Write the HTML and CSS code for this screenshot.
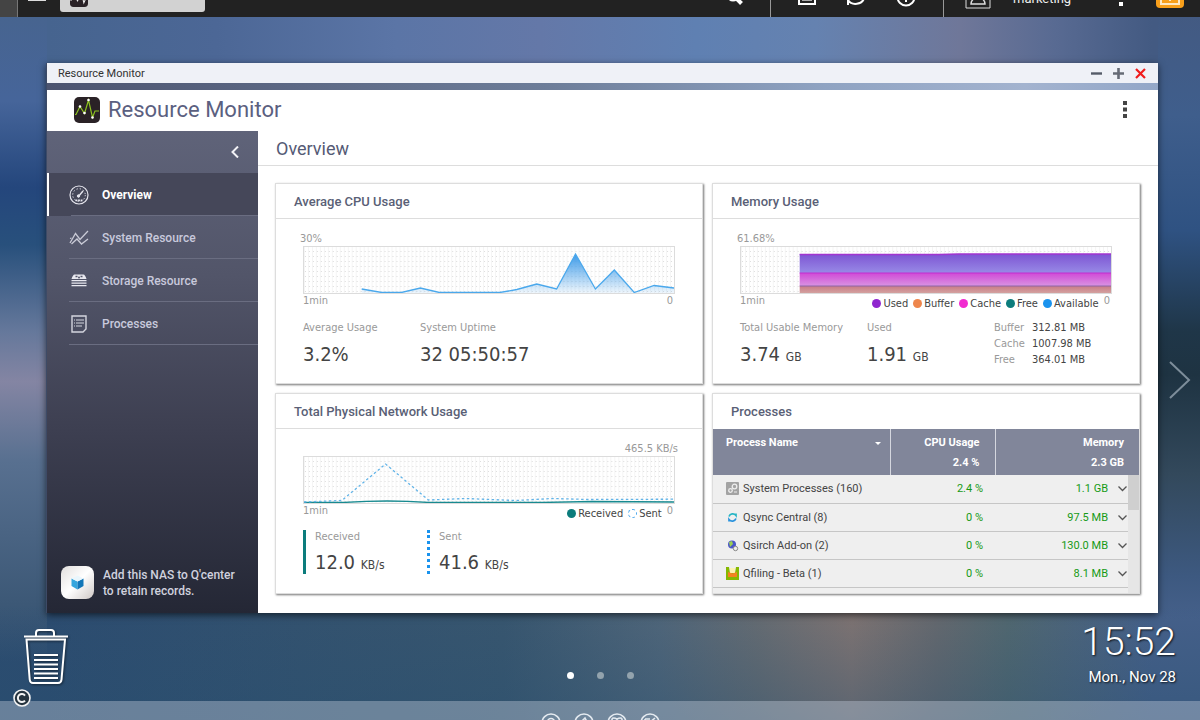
FILE: index.html
```html
<!DOCTYPE html>
<html lang="en">
<head>
<meta charset="utf-8">
<title>Resource Monitor</title>
<link rel="stylesheet" href="styles.css">
</head>
<body class="desktop">
<header class="topbar">
  <div class="topbar-row">
    <button class="top-btn home" aria-label="Desktop"></button>
    <button class="top-btn menu" aria-label="Main menu"><svg width="18" height="6" viewBox="0 0 18 6" stroke="#ddd" stroke-width="2"><path d="M0 1h18M0 5h18"/></svg></button>
    <button class="task" aria-label="Task: monitor">
      <svg width="18" height="18" viewBox="0 0 26 26"><rect width="26" height="26" rx="5" fill="#2a2226"/><path d="M1 17l5-7 5 7 5-14 4 17 3-7h3" fill="none" stroke="#eee" stroke-width="1.5"/></svg>
    </button>
    <div class="top-right">
      <button class="top-btn search" aria-label="Search"><svg width="18" height="18" viewBox="0 0 18 18" fill="none" stroke="#fff"><circle cx="7" cy="6" r="5.500" stroke-width="2"/><path d="M10.500 9.500l5 5" stroke-width="4"/></svg></button>
      <div class="top-group">
        <button class="top-btn" aria-label="Background tasks"><svg width="18" height="18" viewBox="0 0 18 18"><path d="M1 0h16v15H1z" fill="none" stroke="#fff" stroke-width="2"/><path d="M4 3h10v9H4z" fill="#aaa"/></svg></button>
        <button class="top-btn" aria-label="External devices"><svg width="20" height="20" viewBox="0 0 20 20" fill="none" stroke="#fff" stroke-width="2"><path d="M2 12a8.500 7 0 0 0 16-2V4M1 10h6M2 12v5"/></svg></button>
        <button class="top-btn" aria-label="Notifications"><svg width="20" height="20" viewBox="0 0 20 20" fill="none" stroke="#fff" stroke-width="2"><circle cx="10" cy="9" r="8.500"/><path d="M10 5v9"/></svg></button>
      </div>
      <div class="user-group">
        <svg width="26" height="24" viewBox="0 0 26 24" fill="none" stroke="#ddd"><path d="M1 0h24v22H1z"/><circle cx="13" cy="7" r="4.500"/><path d="M6 18c0-8 14-8 14 0z" stroke-width="1.500"/></svg>
        <span class="user-name">marketing</span>
        <button class="top-btn more" aria-label="More"><svg width="4" height="16" viewBox="0 0 4 16" fill="#fff"><path d="M0 0h4v4H0zM0 6h4v4H0zM0 12h4v4H0z"/></svg></button>
        <button class="top-btn dash" aria-label="Dashboard"><svg width="28" height="20" viewBox="0 0 28 20"><rect width="28" height="20" rx="4" fill="#f9a01b"/><path d="M5 7h18v9H5z" fill="none" stroke="#ffe9c4" stroke-width="2"/><path d="M14 8v5" stroke="#ffe9c4" stroke-width="2"/></svg></button>
      </div>
    </div>
  </div>
</header>

<div class="stage">
  <section class="window">
    <div class="titlebar">
      <span>Resource Monitor</span>
      <div class="win-buttons">
        <button aria-label="Minimize"><svg width="11" height="11" viewBox="0 0 11 11" stroke="#555b68" stroke-width="2.4"><path d="M0 5.5h11"/></svg></button>
        <button aria-label="Maximize"><svg width="11" height="11" viewBox="0 0 11 11" stroke="#666b76" stroke-width="2.6"><path d="M0 5.5h11M5.500 0v11"/></svg></button>
        <button aria-label="Close"><svg width="11" height="11" viewBox="0 0 11 11" stroke="#f01c1c" stroke-width="2.2"><path d="M1 1l9 9M10 1l-9 9"/></svg></button>
      </div>
    </div>
    <div class="glass"></div>
    <div class="app-head">
      <svg width="26" height="26" viewBox="0 0 26 26"><rect width="26" height="26" rx="5" fill="#2a2226"/><path d="M1 17.500h1l4-8 4.500 7L14.500 3l4 17.500 2.500-6.500h4" fill="none" stroke="#8cc21f" stroke-width="1.2"/><g fill="#fff"><circle cx="6" cy="9.500" r="1.300"/><circle cx="10.500" cy="16" r="1.300"/><circle cx="14.500" cy="3" r="1.300"/><circle cx="18.500" cy="20.500" r="1.300"/></g></svg>
      <h1>Resource Monitor</h1>
      <button class="kebab" aria-label="Options"><svg width="4" height="17" viewBox="0 0 4 17" fill="#444"><path d="M0 0h4v4H0zM0 6.500h4v4H0zM0 13h4v4H0z"/></svg></button>
    </div>
    <div class="app-body">
      <aside class="sidebar">
        <button class="collapse" aria-label="Collapse"><svg width="8" height="12" viewBox="0 0 8 12" fill="none" stroke="#f2f2f6" stroke-width="2"><path d="M7 0.500L1.500 6 7 11.500"/></svg></button>
        <nav>
          <a class="nav-item active" href="#overview"><svg width="20" height="20" viewBox="0 0 20 20" fill="none" stroke="#e6e6ee"><circle cx="10" cy="10" r="9" stroke-width="1.200"/><circle cx="10" cy="10" r="6.300" stroke-dasharray="1.300 2"/><path d="M9 12l5-6" stroke-width="1.400"/><circle cx="9.500" cy="11" r="1.200" fill="#e6e6ee"/><path d="M6.500 15.300h7" stroke-width="1.800" stroke-dasharray="1.800 .8"/></svg><span>Overview</span></a>
          <a class="nav-item" href="#system"><svg width="20" height="20" viewBox="0 0 20 20" fill="none" stroke="#c9cad6" stroke-width="1.300"><path d="M1 15L6.500 5.500l4.500 6L19 3"/><path d="M1 10.500l1.500-.5M2.500 16L8 11l4.500 5 6.500-5"/></svg><span>System Resource</span></a>
          <a class="nav-item" href="#storage"><svg width="20" height="20" viewBox="0 0 20 20" fill="#e8e8ef"><path d="M5.500 3.500h9q1.500 0 3 4.500h-15q1.500-4.500 3-4.500zM2.500 9h15v1.300h-15zM2.500 11.500h15v1.300h-15zM2.500 14h15v1.300h-15z"/><path d="M6.500 5.500h2M11.500 5.500h2" stroke="#525569" stroke-width="1.300"/><circle cx="10" cy="6.500" r="1" fill="#525569"/></svg><span>Storage Resource</span></a>
          <a class="nav-item" href="#processes"><svg width="20" height="20" viewBox="0 0 20 20" fill="none" stroke="#d4d5de" stroke-width="1.400"><path d="M3 2h14v13l-3 3H3z"/><path d="M7 6h8M7 9h8M7 12h6M5 6h1M5 9h1M5 12h1" stroke-width="1.200"/></svg><span>Processes</span></a>
        </nav>
        <a class="qcenter" href="#qcenter">
          <svg width="33" height="33" viewBox="0 0 33 33"><defs><linearGradient id="tile" x2="1" y2="1"><stop offset="0" stop-color="#e2dfde"/><stop offset=".5" stop-color="#fff"/><stop offset="1" stop-color="#cfc8c6"/></linearGradient></defs><rect width="33" height="33" rx="8" fill="url(#tile)"/><path d="M10.500 12.500l6 3v8l-6-3.500z" fill="#35a6de"/><path d="M22.500 12.500l-6 3v8l6-3.500z" fill="#1276b8"/><path d="M10.500 12.500l6-3 6 3-6 3z" fill="#eaf6fc"/></svg>
          <span>Add this NAS to Q'center<br>to retain records.</span>
        </a>
      </aside>
      <main class="content">
        <h2>Overview</h2>
        <div class="cards">
          <section class="card">
            <h3>Average CPU Usage</h3>
            <div class="card-body">
              <div class="scale">30%</div>
              <svg class="chart" viewBox="0 0 372 46" preserveAspectRatio="none">
                <defs>
                  <pattern id="grid" width="4" height="5" patternUnits="userSpaceOnUse"><path d="M0 4.500h2" stroke="#dedede"/><path d="M.5 0v5" stroke="#f5f5f5"/></pattern>
                  <linearGradient id="cpu" x2="0" y2="1"><stop offset="0" stop-color="#3c9ae8"/><stop offset="1" stop-color="#3c9ae8" stop-opacity=".08"/></linearGradient>
                </defs>
                <rect width="372" height="46" fill="url(#grid)"/>
                <path d="M58 42l20 4h20l19-5 19 5h61l17-3.500 20-5.500 20 5 19-35 20 35 19-19 20 23 20-7.500 20 2.500v5H58z" fill="url(#cpu)"/>
                <path d="M58 42l20 3.500h20l19-4.500 19 4.500h61l17-3 20-5.500 20 5 19-35 20 35 19-19 20 22.500 20-7 20 2.500" fill="none" stroke="#4aa8ec" stroke-width="1.300"/>
              </svg>
              <div class="axis"><span>1min</span><span class="zero">0</span></div>
              <div class="stats">
                <dl class="stat narrow"><dt>Average Usage</dt><dd>3.2%</dd></dl>
                <dl class="stat"><dt>System Uptime</dt><dd>32 05:50:57</dd></dl>
              </div>
            </div>
          </section>

          <section class="card">
            <h3>Memory Usage</h3>
            <div class="card-body">
              <div class="scale">61.68%</div>
              <svg class="chart" viewBox="0 0 372 46" preserveAspectRatio="none">
                <defs>
                  <linearGradient id="used" x2="0" y2="1"><stop offset="0" stop-color="#7d55d3"/><stop offset="1" stop-color="#988ae6"/></linearGradient>
                  <linearGradient id="cache" x2="0" y2="1"><stop offset="0" stop-color="#d04ad6"/><stop offset="1" stop-color="#d993e2"/></linearGradient>
                  <linearGradient id="buffer" x2="0" y2="1"><stop offset="0" stop-color="#c97b86"/><stop offset="1" stop-color="#d3a19f"/></linearGradient>
                </defs>
                <rect width="372" height="46" fill="url(#grid)"/>
                <rect x="59" y="7" width="313" height="19" fill="url(#used)"/>
                <rect x="59" y="26" width="313" height="13" fill="url(#cache)"/>
                <rect x="59" y="39" width="313" height="7" fill="url(#buffer)"/>
                <path d="M59 7.500h140l20-.5h153" fill="none" stroke="#a235cf" stroke-width="1.300"/>
                <path d="M59 26h313" stroke="#c22fd0"/><path d="M59 39h313" stroke="#8d64a8"/>
              </svg>
              <div class="axis"><span>1min</span>
                <ul class="legend">
                  <li><i class="dot used"></i>Used</li><li><i class="dot buffer"></i>Buffer</li><li><i class="dot cache"></i>Cache</li><li><i class="dot free"></i>Free</li><li><i class="dot available"></i>Available</li>
                </ul>
                <span class="zero">0</span></div>
              <div class="stats">
                <dl class="stat medium"><dt>Total Usable Memory</dt><dd>3.74 <small>GB</small></dd></dl>
                <dl class="stat medium"><dt>Used</dt><dd>1.91 <small>GB</small></dd></dl>
                <dl class="mini"><dt>Buffer</dt><dd>312.81 MB</dd><dt>Cache</dt><dd>1007.98 MB</dd><dt>Free</dt><dd>364.01 MB</dd></dl>
              </div>
            </div>
          </section>

          <section class="card">
            <h3>Total Physical Network Usage</h3>
            <div class="card-body">
              <div class="scale right">465.5 KB/s</div>
              <svg class="chart" viewBox="0 0 372 46" preserveAspectRatio="none">
                <rect width="372" height="46" fill="url(#grid)"/>
                <path d="M0 45.500h40q45-3 85 0h115l50-1 82 .5" fill="none" stroke="#188a90" stroke-width="1.300"/>
                <path d="M0 45l38-1.500L82 7l43 36 37-1.500 51 2 37-2 36 1 86-.3" fill="none" stroke="#62b4e8" stroke-width="1.300" stroke-dasharray="2.500 2.500"/>
              </svg>
              <div class="axis"><span>1min</span>
                <ul class="legend"><li><i class="dot free"></i>Received</li><li><i class="dot sent"></i>Sent</li></ul>
                <span class="zero">0</span></div>
              <div class="stats">
                <dl class="stat barred received"><dt>Received</dt><dd>12.0 <small>KB/s</small></dd></dl>
                <dl class="stat barred sent"><dt>Sent</dt><dd>41.6 <small>KB/s</small></dd></dl>
              </div>
            </div>
          </section>

          <section class="card processes">
            <h3>Processes</h3>
            <div class="table-wrap">
              <table>
                <colgroup><col class="c-name"><col class="c-cpu"><col></colgroup>
                <thead><tr>
                  <th scope="col" class="name"><span class="th-name">Process Name<i class="sort"></i></span></th>
                  <th scope="col">CPU Usage<br>2.4 %</th>
                  <th scope="col" class="mem">Memory<br>2.3 GB</th>
                </tr></thead>
                <tbody>
                  <tr><td class="name"><span class="proc"><svg width="13" height="13" viewBox="0 0 13 13"><rect width="13" height="13" rx="1" fill="#a3a3a3"/><circle cx="8.500" cy="4.500" r="2.300" fill="none" stroke="#eee" stroke-width="1.300"/><circle cx="4.500" cy="8.500" r="1.800" fill="none" stroke="#eee" stroke-width="1.300"/><path d="M8 10h3" stroke="#eee"/></svg>System Processes (160)</span></td><td>2.4 %</td><td class="mem">1.1 GB<button class="expand" aria-label="Expand System Processes"><svg width="9" height="6" viewBox="0 0 9 6"><path d="M.5.500l4 4 4-4"/></svg></button></td></tr>
                  <tr><td class="name"><span class="proc"><svg width="13" height="13" viewBox="0 0 13 13" fill="none" stroke-width="1.700"><path d="M3 5.500C4 2.500 8 2 10 4.500V2.500" stroke="#27b5c4"/><path d="M10 7.500C9 10.500 5 11 3 8.500v2" stroke="#2b93dd"/></svg>Qsync Central (8)</span></td><td>0 %</td><td class="mem">97.5 MB<button class="expand" aria-label="Expand Qsync Central"><svg width="9" height="6" viewBox="0 0 9 6"><path d="M.5.500l4 4 4-4"/></svg></button></td></tr>
                  <tr><td class="name"><span class="proc"><svg width="13" height="13" viewBox="0 0 13 13"><circle cx="6" cy="5.500" r="4" fill="#4a56c8"/><path d="M3 3l3-1 1 3-3 3z" fill="#9ccf52"/><circle cx="9.500" cy="9.500" r="2.200" fill="#eee" stroke="#888"/></svg>Qsirch Add-on (2)</span></td><td>0 %</td><td class="mem">130.0 MB<button class="expand" aria-label="Expand Qsirch Add-on"><svg width="9" height="6" viewBox="0 0 9 6"><path d="M.5.500l4 4 4-4"/></svg></button></td></tr>
                  <tr><td class="name"><span class="proc"><svg width="13" height="13" viewBox="0 0 13 13"><path d="M0 0h3l1 6h5l1-6h3v13H0z" fill="#86b800"/><path d="M4 1h5v5H4z" fill="#fdf3b0"/><path d="M2 5l4.500 1.500L11 5v5H2z" fill="#f58220"/></svg>Qfiling - Beta (1)</span></td><td>0 %</td><td class="mem">8.1 MB<button class="expand" aria-label="Expand Qfiling"><svg width="9" height="6" viewBox="0 0 9 6"><path d="M.5.500l4 4 4-4"/></svg></button></td></tr>
                </tbody>
              </table>
              <div class="track"><div class="thumb"></div></div>
            </div>
          </section>
        </div>
      </main>
    </div>
  </section>
  <div class="gutter"><button aria-label="Next desktop"><svg width="24" height="40" viewBox="0 0 24 40" fill="none" stroke="#7d8d9a" stroke-width="2"><path d="M2 2l19 18L2 38"/></svg></button></div>
</div>

<div class="desk">
  <button class="trash" aria-label="Recycle Bin"><svg width="44" height="56" viewBox="0 0 44 56" fill="none" stroke="#fff" stroke-width="2"><path d="M0 7.500h44M12 7V4q0-3 3-3h12q3 0 3 3v3M2.500 10.500h38.500l-3.500 40q-.3 3.500-3.500 3.500H9q-3 0-3.300-3.500z"/><path d="M10 26h24M10 31h24M10 35.500h24M10 40h24M10 44.500h24M10 49h24"/></svg></button>
  <div class="pager"><button class="on" aria-label="Desktop 1"></button><button aria-label="Desktop 2"></button><button aria-label="Desktop 3"></button></div>
  <div class="clock"><time class="time">15:52</time><div class="date">Mon., Nov 28</div></div>
</div>
<footer class="dock">
  <svg width="20" height="20" viewBox="0 0 20 20" fill="none" stroke="#e4eaf0" stroke-width="1.600"><circle cx="10" cy="10" r="9"/><circle cx="10" cy="9" r="3.500"/></svg>
  <svg width="20" height="20" viewBox="0 0 20 20" fill="none" stroke="#e4eaf0" stroke-width="1.600"><circle cx="10" cy="10" r="9"/><path d="M6 10l5-5 1 2-3 4M12 7l2 2"/></svg>
  <svg width="20" height="20" viewBox="0 0 20 20" fill="none" stroke="#e4eaf0" stroke-width="1.600"><circle cx="10" cy="10" r="9"/><path d="M10 6q-4-2-5 0v6M10 6q4-2 5 0v6M10 6v6"/></svg>
  <svg width="20" height="20" viewBox="0 0 20 20" fill="none" stroke="#e4eaf0" stroke-width="1.600"><circle cx="10" cy="10" r="9"/><path d="M5 6h5M5 6v6M9 10l6-5"/></svg>
</footer>
<button class="copyright" aria-label="Copyright"><svg width="18" height="18" viewBox="0 0 18 18" fill="none" stroke="#f4f4f4"><circle cx="9" cy="9" r="8" fill="#26343f" stroke-width="1.600"/><path d="M12 6.500a4 4 0 1 0 0 5" stroke-width="2"/></svg></button>
</body>
</html>
```

FILE: styles.css
```css
* { box-sizing: border-box; }
button { border: 0; padding: 0; background: none; font: inherit; color: inherit; display: flex; }
a { text-decoration: none; color: inherit; }
h1, h2, h3, dl, dd, ul { margin: 0; padding: 0; font-weight: 400; }
svg { display: block; flex: none; }

.desktop {
  margin: 0;
  min-height: 100vh;
  display: flex;
  flex-direction: column;
  position: relative;
  overflow: hidden;
  font-family: Roboto, "Liberation Sans", sans-serif;
  font-size: 12px;
  background:
    linear-gradient(rgba(38, 78, 118, 0) 84%, rgba(38, 78, 110, .4)) 100% 0 / 100% 100% no-repeat,
    linear-gradient(#47648f 2%, #46659a 14%, #24467c 26%, #28507c 34%, #65789b 46%, #8485a3 53%, #587090 64%, #3c5876 84%, #2c4c70 92%) 0 0 / 47px 100% no-repeat,
    linear-gradient(#435a82 2%, #3f5e8c 16%, #2f5282 32%, #1f3648 46%, #1e3342 52%, #33495c 66%, #3d5980 80%, #45608a 86%) 100% 0 / 42px 100% no-repeat,
    linear-gradient(90deg, #46648f 4%, #4c6796 18%, #5b75a6 33%, #6478a8 45%, #5f80b2 58%, #6582b0 68%, #6f7799 80%, #586a92 88%, #435a82 96%) 0 0 / 100% 50% no-repeat,
    linear-gradient(90deg, #2c4c70 4%, #33526f 25%, #38566f 42%, #50667a 55%, #666c72 63%, #807472 71%, #66696e 78%, #526870 84%, #45608a 96%) 0 100% / 100% 50% no-repeat;
}

.topbar { height: 17px; overflow: hidden; display: flex; align-items: flex-end; background: #222; color: #eee; }
.topbar-row { flex: 1; height: 38px; display: flex; align-items: center; }
.home { width: 18px; height: 38px; background: #444; border-right: 1px solid #777; }
.menu { margin-left: 10px; }
.task { margin-left: 14px; width: 145px; height: 28px; padding: 0 10px; align-items: center; background: #d2d2d2; border-radius: 3px; }
.top-right { margin-left: auto; height: 38px; display: flex; align-items: center; }
.search { margin-right: 26px; }
.top-group { height: 38px; display: flex; align-items: center; gap: 30px; padding: 0 27px; border-left: 1px solid #999; }
.user-group { height: 38px; display: flex; align-items: center; padding: 0 16px 0 21px; border-left: 1px solid #999; }
.user-name { width: 90px; margin-left: 22px; font-size: 13px; }
.more { margin-left: 16px; }
.dash { margin-left: 33px; }

.stage { display: flex; padding: 46px 0 0 46px; }
.window { flex: 1; min-width: 0; box-shadow: 0 2px 7px rgba(0, 0, 0, .6); border-left: 1px solid #3d4a66; }
.titlebar { height: 20px; display: flex; align-items: center; justify-content: space-between; padding: 0 12px 0 11px; background: #eff1f7; color: #333; font-size: 11px; }
.win-buttons { display: flex; gap: 11px; }
.glass { height: 7px; background: linear-gradient(90deg, #4c5470, #6d7d99 45%, #8fa3c2 70%, #a3b3cf 88%, #93a7c8); }
.app-head { height: 41px; display: flex; align-items: center; padding: 0 31px 2px 27px; background: #fff; }
.app-head h1 { margin-left: 8px; font-size: 22px; color: #5b6080; }
.kebab { margin-left: auto; }

.app-body { display: flex; background: #fff; }
.sidebar { width: 211px; flex: none; display: flex; flex-direction: column; background: linear-gradient(#5f6379, #525569 30%, #3d3f51 62%, #242735); color: #c8c9dc; }
.collapse { height: 42px; align-items: center; justify-content: flex-end; padding-right: 19px; }
.nav-item { height: 43px; display: flex; align-items: center; gap: 13px; padding-left: 22px; font-weight: 500; position: relative; }
.nav-item::after { content: ""; position: absolute; left: 22px; right: 0; bottom: 0; height: 1px; background: #6a6d81; }
.nav-item.active { background: #454759; color: #fff; font-weight: 700; border-left: 2px solid #fff; padding-left: 20px; }
.qcenter { margin-top: auto; display: flex; align-items: center; gap: 9px; padding: 0 0 14px 14px; line-height: 16px; font-weight: 500; color: #d0d1de; }

.content { flex: 1; min-width: 0; }
.content h2 { height: 35px; padding-left: 18px; line-height: 35px; font-size: 18px; color: #555a75; border-bottom: 1px solid #ddd; }
.cards { display: grid; grid-template-columns: 1fr 1fr; gap: 9px; padding: 17px 18px 19px 17px; }
.card { min-width: 0; height: 201px; background: #fff; border: 1px solid #ddd; box-shadow: 1px 1px 2px rgba(0, 0, 0, .55); }
.card h3 { height: 35px; padding-left: 18px; line-height: 35px; font-size: 13px; font-weight: 500; color: #5a5f76; border-bottom: 1px solid #ddd; }
.card-body { padding: 12px 27px 0; font-family: "DejaVu Sans Condensed", "DejaVu Sans", sans-serif; font-stretch: condensed; font-size: 11px; color: #999; }
.scale { height: 15px; line-height: 16px; margin: 0 -3px; }
.scale.right { text-align: right; }
.chart { width: 100%; height: 48px; border: 1px solid #dcdcdc; }
.axis { height: 20px; display: flex; line-height: 13px; }
.axis .zero { margin-left: auto; padding-right: 2px; }
.legend { height: 18px; margin-left: auto; display: flex; gap: 5px; list-style: none; color: #444; }
.legend li { display: flex; align-items: center; gap: 2px; }
.legend + .zero { margin-left: 5px; }
.dot { width: 9px; height: 9px; border-radius: 5px; }
.dot.used { background: #9026cf; }
.dot.buffer { background: #ee864c; }
.dot.cache { background: #f12bd0; }
.dot.free { background: #0c7c7c; }
.dot.available { background: #1a93ee; }
.dot.sent { border: 1px dashed #4aa8ec; }
.stats { display: flex; align-items: flex-start; padding-top: 6px; }
.stat dt { line-height: 16px; }
.stat dd { line-height: 36px; font-size: 20px; color: #444; white-space: nowrap; }
.stat small { font-size: 12px; }
.narrow { width: 117px; }
.medium { width: 127px; }
.mini { display: grid; grid-template-columns: 38px auto; line-height: 16px; white-space: nowrap; }
.mini dd { color: #444; }
.barred { width: 124px; height: 44px; padding-left: 9px; border-left: 3px solid #0c7c7c; }
.barred dt { line-height: 14px; }
.barred.sent { border-left: 3px dotted #1a93ee; }

.processes { overflow: hidden; }
.processes h3 { border-bottom: 0; }
.table-wrap { position: relative; height: 165px; overflow: hidden; background: #efefef; }
table { width: 100%; border-collapse: collapse; table-layout: fixed; }
.c-name { width: 177px; }
.c-cpu { width: 105px; }
th, td { padding: 0 12px; text-align: right; font-size: 11px; }
th { height: 46px; padding-right: 15px; line-height: 20px; padding-top: 4px; vertical-align: top; background: #81869a; color: #fff; font-weight: 700; border-right: 1px solid #d5d7df; }
th:last-child { border-right: 0; }
td { height: 28px; color: #169a16; border-bottom: 1px solid #c6c6c6; }
.name { text-align: left; white-space: nowrap; padding-left: 13px; }
.th-name { display: flex; align-items: center; justify-content: space-between; }
th.name { padding-right: 9px; }
.sort { border: 3px solid transparent; border-top-color: #fff; border-bottom: 0; }
td.name { color: #444; }
.proc { display: flex; align-items: center; gap: 4px; }
.expand { display: inline-flex; margin-left: 10px; vertical-align: middle; }
.expand path { fill: none; stroke: #555; stroke-width: 1.3; }
.track { position: absolute; top: 46px; right: 0; bottom: 0; width: 11px; background: #e6e6e6; }
.thumb { height: 35px; background: #cfcfcf; }

.gutter { width: 42px; display: flex; align-items: center; padding: 84px 0 0 10px; }

.desk { flex: 1; display: grid; grid-template-columns: 1fr auto 1fr; padding: 13px 24px 0; color: #fff; }
.trash { margin-top: 3px; align-self: start; justify-self: start; filter: drop-shadow(1px 1px 1px rgba(0, 0, 0, .5)); }
.pager { display: flex; gap: 23px; padding-top: 46px; }
.pager button { width: 7px; height: 7px; border-radius: 4px; background: #93a3ad; }
.pager .on { background: #fff; }
.clock { text-align: right; text-shadow: 1px 1px 2px rgba(0, 0, 0, .8); }
.time { display: block; font-size: 39px; line-height: 32px; font-weight: 300; }
.date { margin-top: 10px; font-size: 15px; line-height: 18px; }
.dock { height: 19px; overflow: hidden; display: flex; justify-content: center; gap: 13px; padding-top: 12px; background: rgba(190, 200, 215, .42); }
.copyright { position: absolute; left: 13px; bottom: 13px; }
```
